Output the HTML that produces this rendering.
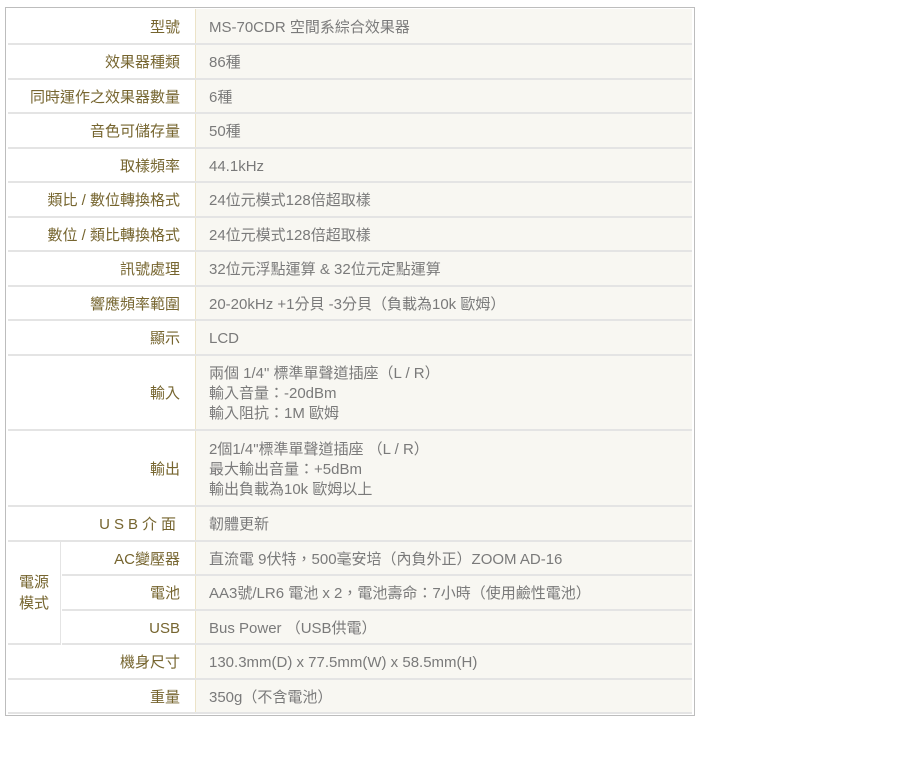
<!DOCTYPE html>
<html><head><meta charset="utf-8"><style>
body{margin:0;background:#fff;font-family:"Liberation Sans","Noto Sans CJK TC",sans-serif;font-size:15px;}
#t{position:absolute;left:5px;top:7px;width:688px;height:707px;border:1px solid #bdbdbd;background:#fff;}
.r{position:absolute;left:2px;width:684px;border-bottom:2px solid #e4e4e4;box-sizing:border-box;}
.l{position:absolute;left:0;width:186px;top:0;bottom:0;color:#76652f;text-align:right;box-sizing:border-box;padding-right:14px;padding-top:3px;display:flex;align-items:center;justify-content:flex-end;line-height:20px;}
.v{position:absolute;left:187px;right:0;top:0;bottom:0;background:#f8f7f2;border-left:1px solid #ece3c8;color:#7a7a7a;padding-left:13px;padding-top:3px;box-sizing:border-box;display:flex;flex-direction:column;justify-content:center;line-height:20px;}
</style></head><body><div id="t">
<div class="r" style="top:1px;height:36px"><div class="l">型號</div><div class="v">MS-70CDR 空間系綜合效果器</div></div>
<div class="r" style="top:37px;height:35px"><div class="l">效果器種類</div><div class="v">86種</div></div>
<div class="r" style="top:72px;height:34px"><div class="l">同時運作之效果器數量</div><div class="v">6種</div></div>
<div class="r" style="top:106px;height:35px"><div class="l">音色可儲存量</div><div class="v">50種</div></div>
<div class="r" style="top:141px;height:34px"><div class="l">取樣頻率</div><div class="v">44.1kHz</div></div>
<div class="r" style="top:175px;height:35px"><div class="l">類比 / 數位轉換格式</div><div class="v">24位元模式128倍超取樣</div></div>
<div class="r" style="top:210px;height:34px"><div class="l">數位 / 類比轉換格式</div><div class="v">24位元模式128倍超取樣</div></div>
<div class="r" style="top:244px;height:35px"><div class="l">訊號處理</div><div class="v">32位元浮點運算 &amp; 32位元定點運算</div></div>
<div class="r" style="top:279px;height:34px"><div class="l">響應頻率範圍</div><div class="v">20-20kHz +1分貝 -3分貝（負載為10k 歐姆）</div></div>
<div class="r" style="top:313px;height:35px"><div class="l">顯示</div><div class="v">LCD</div></div>
<div class="r" style="top:348px;height:75px"><div class="l">輸入</div><div class="v"><div>兩個 1/4" 標準單聲道插座（L / R）</div><div>輸入音量：-20dBm</div><div>輸入阻抗：1M 歐姆</div></div></div>
<div class="r" style="top:423px;height:76px"><div class="l">輸出</div><div class="v"><div>2個1/4"標準單聲道插座 （L / R）</div><div>最大輸出音量：+5dBm</div><div>輸出負載為10k 歐姆以上</div></div></div>
<div class="r" style="top:499px;height:35px"><div class="l" style="letter-spacing:4px">USB介面</div><div class="v">韌體更新</div></div>
<div style="position:absolute;left:2px;top:534px;width:53px;height:103px;border-right:1px solid #e4e4e4;border-bottom:2px solid #e4e4e4;box-sizing:border-box;color:#76652f;display:flex;align-items:center;justify-content:center;text-align:center;line-height:21px">電源<br>模式</div>
<div class="r" style="top:534px;height:34px;left:56px;width:630px"><div class="l" style="width:132px">AC變壓器</div><div class="v" style="left:133px">直流電 9伏特，500毫安培（內負外正）ZOOM AD-16</div></div>
<div class="r" style="top:568px;height:35px;left:56px;width:630px"><div class="l" style="width:132px">電池</div><div class="v" style="left:133px">AA3號/LR6 電池 x 2，電池壽命：7小時（使用鹼性電池）</div></div>
<div class="r" style="top:603px;height:34px;left:56px;width:630px"><div class="l" style="width:132px">USB</div><div class="v" style="left:133px">Bus Power （USB供電）</div></div>
<div class="r" style="top:637px;height:35px"><div class="l">機身尺寸</div><div class="v">130.3mm(D) x 77.5mm(W) x 58.5mm(H)</div></div>
<div class="r" style="top:672px;height:34px"><div class="l">重量</div><div class="v">350g（不含電池）</div></div>
</div></body></html>
